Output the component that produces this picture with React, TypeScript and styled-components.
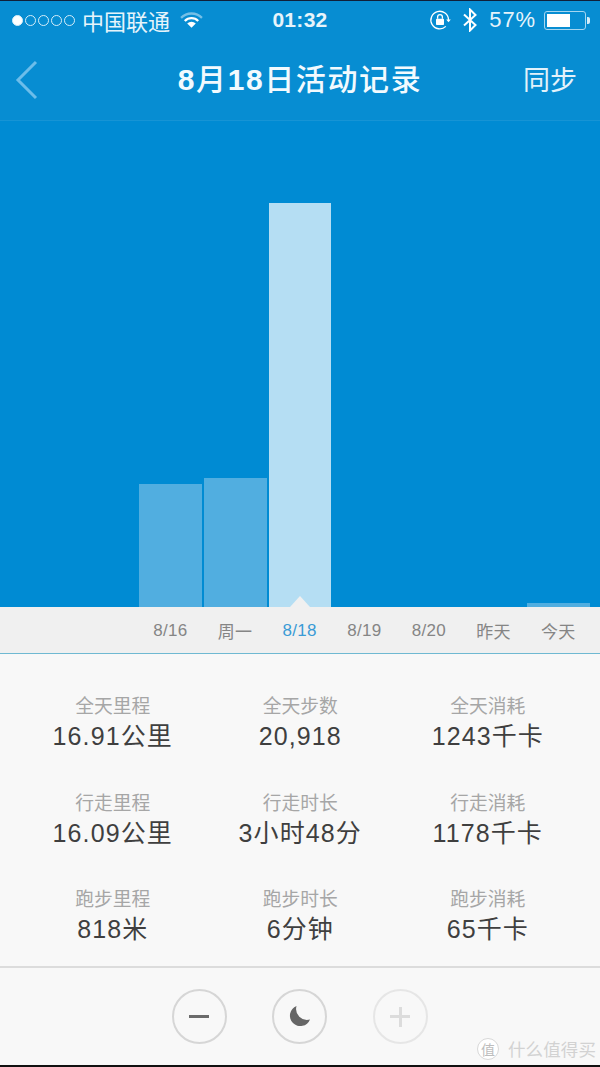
import React from 'react';
import styled, { createGlobalStyle } from 'styled-components';

const GlobalStyle = createGlobalStyle`
  html, body {
    margin: 0;
    padding: 0;
    background: #f8f8f8;
  }
  * {
    box-sizing: border-box;
  }
`;

const FONT = '"Liberation Sans", "Noto Sans CJK SC", sans-serif';

const days = [
  { label: '8/16', height: 123 },
  { label: '周一', height: 129 },
  { label: '8/18', height: 404, active: true },
  { label: '8/19', height: 0 },
  { label: '8/20', height: 0 },
  { label: '昨天', height: 0 },
  { label: '今天', height: 4 },
];

const stats = [
  ['全天里程', '16.91公里'],
  ['全天步数', '20,918'],
  ['全天消耗', '1243千卡'],
  ['行走里程', '16.09公里'],
  ['行走时长', '3小时48分'],
  ['行走消耗', '1178千卡'],
  ['跑步里程', '818米'],
  ['跑步时长', '6分钟'],
  ['跑步消耗', '65千卡'],
];

const WifiIcon = () => (
  <svg width="23" height="16" viewBox="0 0 22 15">
    <path d="M1 5.5 A14 14 0 0 1 21 5.5" fill="none" stroke="#fff" strokeOpacity="0.45" strokeWidth="2.2" />
    <path d="M4.6 8.4 A9 9 0 0 1 17.4 8.4" fill="none" stroke="#fff" strokeWidth="2.2" />
    <path d="M11 15 L6.9 10.9 A6 6 0 0 1 15.1 10.9 Z" fill="#fff" />
  </svg>
);

const RotationLockIcon = () => (
  <svg width="22" height="22" viewBox="0 0 22 22">
    <path d="M19.5 11 A8.8 8.8 0 1 0 16.8 17.4" fill="none" stroke="#fff" strokeWidth="1.3" />
    <path d="M17.2 10.4 L21.8 10.4 L19.5 13.2 Z" fill="#fff" />
    <rect x="7" y="9.8" width="8" height="6.2" rx="0.8" fill="#fff" />
    <path d="M8.6 9.8 V8 A2.4 2.4 0 0 1 13.4 8 V9.8" fill="none" stroke="#fff" strokeWidth="1.3" />
  </svg>
);

const BluetoothIcon = () => (
  <svg width="16" height="24" viewBox="0 0 16 24">
    <path d="M2 6.5 L13.5 17 L8 22.5 V1.5 L13.5 7 L2 17.5" fill="none" stroke="#fff" strokeWidth="2" />
  </svg>
);

const BackIcon = () => (
  <BackSvg width="24" height="40" viewBox="0 0 24 40">
    <path d="M21 2 L3 20 L21 38" fill="none" stroke="#6cbdea" strokeWidth="3" />
  </BackSvg>
);

const MoonIcon = () => (
  <svg width="21" height="21" viewBox="0 0 21 21">
    <path d="M7.5 0 A10.4 10.4 0 1 0 21 13.5 A11 11 0 0 1 7.5 0 Z" fill="#666" />
  </svg>
);

const App: React.FC = () => {
  return (
    <Screen>
      <GlobalStyle />
      <Header>
        <StatusBar>
          <StatusLeft>
            <Signal>
              {[true, false, false, false, false].map((on, i) => (
                <SignalDot key={i} $on={on} />
              ))}
            </Signal>
            <Carrier>中国联通</Carrier>
            <WifiIcon />
          </StatusLeft>
          <Clock>01:32</Clock>
          <StatusRight>
            <RotationLockIcon />
            <BluetoothIcon />
            <Percent>57%</Percent>
            <Battery>
              <BatteryFill />
            </Battery>
          </StatusRight>
        </StatusBar>
        <NavBar>
          <BackIcon />
          <Title>
            <TitleNum>8</TitleNum>月<TitleNum>18</TitleNum>日活动记录
          </Title>
          <SyncLabel>同步</SyncLabel>
        </NavBar>
      </Header>

      <Chart>
        {days.map((day) => (
          <BarSlot key={day.label}>
            {day.height > 0 && <Bar $active={day.active} style={{ height: day.height }} />}
          </BarSlot>
        ))}
      </Chart>

      <DateStrip>
        {days.map((day) => (
          <DateLabel key={day.label} $active={day.active}>
            {day.label}
          </DateLabel>
        ))}
      </DateStrip>

      <StatsGrid>
        {stats.map(([label, value]) => (
          <Stat key={label}>
            <StatLabel>{label}</StatLabel>
            <StatValue>{value}</StatValue>
          </Stat>
        ))}
      </StatsGrid>

      <Footer>
        <RoundButton>
          <Dash />
        </RoundButton>
        <RoundButton>
          <MoonIcon />
        </RoundButton>
        <RoundButton $disabled>
          <PlusMark />
        </RoundButton>
        <Watermark>
          <WatermarkBadge>值</WatermarkBadge>
          什么值得买
        </Watermark>
      </Footer>
    </Screen>
  );
};

export default App;

const Screen = styled.div`
  position: relative;
  width: 600px;
  height: 1067px;
  overflow: hidden;
  display: flex;
  flex-direction: column;
  font-family: ${FONT};
  background: #f8f8f8;
  border-top: 1px solid #10203a;
  border-bottom: 2px solid #111;
`;

const Header = styled.header`
  height: 120px;
  background: #078dd2;
  border-bottom: 1px solid #1694d5;
  color: #fff;
  flex: none;
`;

const StatusBar = styled.div`
  height: 38px;
  padding: 0 12px;
  display: flex;
  align-items: center;
`;

const StatusLeft = styled.div`
  display: flex;
  align-items: center;
  flex: 1;
`;

const Signal = styled.div`
  display: flex;
  gap: 2px;
  margin-right: 7px;
`;

const SignalDot = styled.span<{ $on?: boolean }>`
  width: 11px;
  height: 11px;
  border-radius: 50%;
  border: 1px solid #d5edf9;
  background: ${(p) => (p.$on ? '#fff' : 'transparent')};
`;

const Carrier = styled.span`
  font-size: 22px;
  color: #e6f4fb;
  margin-right: 10px;
`;

const Clock = styled.span`
  font-size: 21px;
  font-weight: 700;
  color: #e6f4fb;
  letter-spacing: 0.3px;
`;

const StatusRight = styled.div`
  display: flex;
  align-items: center;
  justify-content: flex-end;
  gap: 11px;
  flex: 1;
`;

const Percent = styled.span`
  font-size: 22px;
  color: #e6f4fb;
  margin-right: -3px;
  letter-spacing: 0.9px;
`;

const Battery = styled.div`
  position: relative;
  width: 42px;
  height: 19px;
  border: 1px solid #a5d6f0;
  border-radius: 3px;
  padding: 2px;
  margin-right: 2px;

  &::after {
    content: '';
    position: absolute;
    right: -5px;
    top: 5px;
    width: 3px;
    height: 7px;
    border-radius: 0 2px 2px 0;
    background: #d5edf9;
  }
`;

const BatteryFill = styled.div`
  width: 23px;
  height: 100%;
  background: #fff;
`;

const NavBar = styled.div`
  height: 81px;
  padding: 0 23px;
  display: grid;
  grid-template-columns: 1fr auto 1fr;
  align-items: center;
`;

const BackSvg = styled.svg`
  margin-left: -8px;
`;

const Title = styled.h1`
  margin: 0 0 5px 0;
  font-size: 30px;
  font-weight: 500;
  letter-spacing: 1.6px;
  color: #f2fafe;
`;

const TitleNum = styled.span`
  font-weight: 700;
`;

const SyncLabel = styled.span`
  justify-self: end;
  margin-bottom: 2px;
  font-size: 27px;
  color: #e2f2fb;
`;

const Chart = styled.div`
  flex: none;
  height: 486px;
  padding-left: 139.4px;
  background: #008bd3;
  display: grid;
  grid-template-columns: repeat(7, 64.67px);
  align-items: end;
`;

const BarSlot = styled.div`
  width: 62.6px;
  display: flex;
  align-items: flex-end;
`;

const Bar = styled.div<{ $active?: boolean }>`
  position: relative;
  width: 100%;
  background: ${(p) => (p.$active ? '#b5def3' : '#51aee0')};

  &::after {
    content: '';
    display: ${(p) => (p.$active ? 'block' : 'none')};
    position: absolute;
    left: 21px;
    bottom: 0;
    border-left: 10px solid transparent;
    border-right: 10px solid transparent;
    border-bottom: 11px solid #f0f0f0;
  }
`;

const DateStrip = styled.div`
  flex: none;
  height: 47px;
  padding: 1px 9px 0 138px;
  background: #f0f0f0;
  border-bottom: 1px solid #6fb9d2;
  display: grid;
  grid-template-columns: repeat(7, 64.67px);
  align-items: center;
`;

const DateLabel = styled.span<{ $active?: boolean }>`
  text-align: center;
  font-size: 17px;
  letter-spacing: 0.3px;
  color: ${(p) => (p.$active ? '#3a9bd6' : '#858585')};
`;

const StatsGrid = styled.section`
  flex: none;
  height: 314px;
  padding: 40px 19px 0 19px;
  border-bottom: 2px solid #dcdcdc;
  display: grid;
  grid-template-columns: repeat(3, 187.5px);
  grid-auto-rows: 96.5px;
  align-content: start;
`;

const Stat = styled.div`
  display: flex;
  flex-direction: column;
  align-items: center;
`;

const StatLabel = styled.span`
  font-size: 18.8px;
  line-height: 25px;
  color: #a6a6a6;
`;

const StatValue = styled.span`
  font-size: 25px;
  line-height: 34px;
  letter-spacing: 1.1px;
  color: #3f3f3f;
`;

const Footer = styled.footer`
  position: relative;
  flex: 1;
  display: flex;
  justify-content: center;
  gap: 45.5px;
  padding: 21px 1px 0 0;
  background: #f8f8f8;
`;

const RoundButton = styled.div<{ $disabled?: boolean }>`
  width: 55px;
  height: 55px;
  border-radius: 50%;
  border: 2px solid ${(p) => (p.$disabled ? '#e6e6e6' : '#d6d6d6')};
  display: flex;
  align-items: center;
  justify-content: center;
`;

const Dash = styled.div`
  width: 20px;
  height: 3px;
  background: #6b6b6b;
`;

const PlusMark = styled.div`
  position: relative;
  width: 20px;
  height: 3px;
  background: #dcdcdc;

  &::after {
    content: '';
    position: absolute;
    left: 8.5px;
    top: -8.5px;
    width: 3px;
    height: 20px;
    background: #dcdcdc;
  }
`;

const Watermark = styled.div`
  position: absolute;
  right: 4px;
  bottom: 4px;
  display: flex;
  align-items: center;
  gap: 9px;
  font-size: 17.5px;
  letter-spacing: 0.1px;
  color: #d2d2d2;
`;

const WatermarkBadge = styled.span`
  width: 22px;
  height: 22px;
  border-radius: 50%;
  background: #fff;
  border: 1px solid #d8d8d8;
  color: #bdbdbd;
  font-size: 14px;
  display: flex;
  align-items: center;
  justify-content: center;
`;
